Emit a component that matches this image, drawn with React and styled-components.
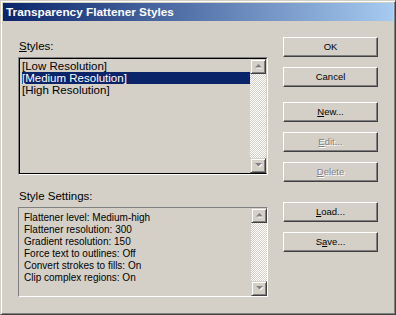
import React from 'react';
import styled, { createGlobalStyle } from 'styled-components';

const Global = createGlobalStyle`
  html, body { margin: 0; padding: 0; background: #d4d0c8; }
  body { font-family: "Liberation Sans", Arial, sans-serif; color: #000; }
`;

const Window = styled.div`
  box-sizing: border-box;
  width: 396px;
  height: 315px;
  background: #d4d0c8;
  border: 1px solid;
  border-color: #d4d0c8 #404040 #404040 #d4d0c8;
  box-shadow: inset 1px 1px 0 #fff, inset -1px -1px 0 #808080;
  padding: 2px;
  display: flex;
  flex-direction: column;
`;

const TitleBar = styled.div`
  height: 18px;
  flex: none;
  display: flex;
  align-items: center;
  padding-left: 3px;
  background: linear-gradient(to right, #0a246a, #a6caf0);
  color: #fff;
  font-weight: bold;
  font-size: 11.8px;
  white-space: nowrap;
`;

const Body = styled.div`
  display: flex;
  padding: 0 15px 0 15px;
  gap: 15px;
`;

const LeftCol = styled.div`
  width: 250px;
  display: flex;
  flex-direction: column;
  padding-top: 19px;
`;

const Label = styled.div`
  font-size: 11.5px;
  line-height: 13px;
  height: 13px;
  margin: ${p => p.$top || 0}px 0 4px 1px;
  white-space: nowrap;
`;

const U = styled.span`
  text-decoration: underline;
  text-underline-offset: 1px;
`;

const ListBox = styled.div`
  box-sizing: border-box;
  height: 118px;
  border: 1px solid;
  border-color: #808080 #fff #fff #808080;
  display: flex;
`;

const ListInner = styled.div`
  flex: 1;
  display: flex;
  border: 1px solid;
  border-color: #000 #d4d0c8 #000 #000;
`;

const Items = styled.div`
  flex: 1;
  padding-top: 1px;
  display: flex;
  flex-direction: column;
`;

const Item = styled.div`
  height: 12px;
  line-height: 12px;
  font-size: 11.5px;
  margin-left: 2px;
  padding-left: 0;
  white-space: nowrap;
  background: ${p => (p.$sel ? '#0a246a' : 'transparent')};
  color: ${p => (p.$sel ? '#fff' : '#000')};
`;

const ScrollBar = styled.div`
  width: 16px;
  flex: none;
  display: flex;
  flex-direction: column;
  justify-content: space-between;
  background-color: #d4d0c8;
  background-image: repeating-conic-gradient(#fff 0 25%, #d4d0c8 0 50%);
  background-size: 2px 2px;
`;

const ArrowBtn = styled.div`
  box-sizing: border-box;
  width: 16px;
  height: 15px;
  background: #d4d0c8;
  border: 1px solid;
  border-color: #d4d0c8 #404040 #404040 #d4d0c8;
  box-shadow: inset 1px 1px 0 #fff, inset -1px -1px 0 #808080;
  display: flex;
  align-items: center;
  justify-content: center;
`;

const SettingsBox = styled.div`
  box-sizing: border-box;
  height: 90px;
  border: 1px solid;
  border-color: #808080 #fff #fff #808080;
  display: flex;
`;

const SettingsText = styled.div`
  flex: 1;
  padding: 4px 0 0 5px;
  font-size: 10px;
  line-height: 12px;
  white-space: nowrap;
`;

const RightCol = styled.div`
  display: flex;
  flex-direction: column;
  padding-top: 16px;
`;

const Button = styled.div`
  box-sizing: border-box;
  width: 95px;
  height: 20px;
  margin-top: ${p => p.$gap || 0}px;
  background: #d4d0c8;
  border: 1px solid;
  border-color: #fff #404040 #404040 #fff;
  box-shadow: inset -1px -1px 0 #808080;
  display: flex;
  align-items: center;
  justify-content: center;
  font-size: 9.5px;
  padding-bottom: 1px;
  color: ${p => (p.$disabled ? '#808080' : '#000')};
  text-shadow: ${p => (p.$disabled ? '1px 1px 0 #fff' : 'none')};
`;

const Arrow = ({ down }) => (
  <svg width="7" height="5" viewBox="0 0 7 5">
    <polygon
      points={down ? '1,1 8,1 4.5,4.5' : '1,4.5 8,4.5 4.5,1'}
      fill="#fff"
      transform="translate(0,0)"
    />
    <polygon points={down ? '0,0 7,0 3.5,3.5' : '0,3.5 7,3.5 3.5,0'} fill="#808080" />
  </svg>
);

const Scroll = () => (
  <ScrollBar>
    <ArrowBtn>
      <Arrow />
    </ArrowBtn>
    <ArrowBtn>
      <Arrow down />
    </ArrowBtn>
  </ScrollBar>
);

const settings = [
  'Flattener level: Medium-high',
  'Flattener resolution: 300',
  'Gradient resolution: 150',
  'Force text to outlines: Off',
  'Convert strokes to fills: On',
  'Clip complex regions: On',
];

export default function App() {
  return (
    <>
      <Global />
      <Window>
        <TitleBar>Transparency Flattener Styles</TitleBar>
        <Body>
          <LeftCol>
            <Label>
              <U>S</U>tyles:
            </Label>
            <ListBox>
              <ListInner>
                <Items>
                  <Item>[Low Resolution]</Item>
                  <Item $sel>[Medium Resolution]</Item>
                  <Item>[High Resolution]</Item>
                </Items>
                <Scroll />
              </ListInner>
            </ListBox>
            <Label $top={15}>Style Settings:</Label>
            <SettingsBox>
              <SettingsText>
                {settings.map(s => (
                  <div key={s}>{s}</div>
                ))}
              </SettingsText>
              <Scroll />
            </SettingsBox>
          </LeftCol>
          <RightCol>
            <Button>OK</Button>
            <Button $gap={10}>Cancel</Button>
            <Button $gap={15}>
              <span><U>N</U>ew...</span>
            </Button>
            <Button $gap={10} $disabled>
              <span><U>E</U>dit...</span>
            </Button>
            <Button $gap={10} $disabled>
              <span><U>D</U>elete</span>
            </Button>
            <Button $gap={20}>
              <span><U>L</U>oad...</span>
            </Button>
            <Button $gap={10}>
              <span>S<U>a</U>ve...</span>
            </Button>
          </RightCol>
        </Body>
      </Window>
    </>
  );
}
